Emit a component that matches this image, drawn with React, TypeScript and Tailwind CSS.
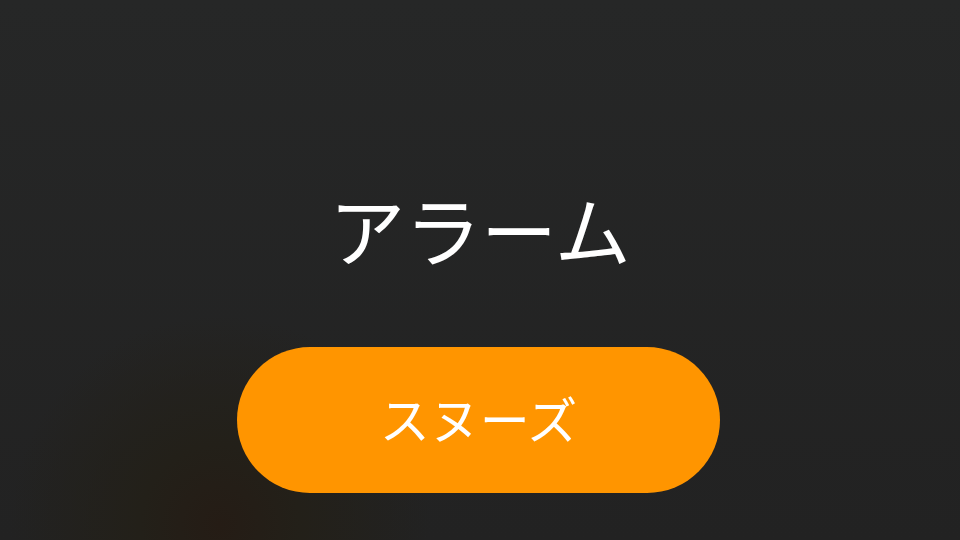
export default function App() {
  return (
    <div
      className="relative flex h-[540px] w-[960px] flex-col items-center overflow-hidden bg-[#252626] bg-[radial-gradient(circle_at_220px_525px,#251c15_0px,#232019_80px,rgba(34,34,34,0)_210px),linear-gradient(to_bottom,#262727,#222222)]"
      style={{ fontFamily: '"Noto Sans CJK JP", "Noto Sans", sans-serif' }}
    >
      <h1 className="mt-[190px] text-[76px] leading-none font-normal text-white">アラーム</h1>
      <button className="mt-[81px] mr-[3px] flex h-[146px] w-[483px] items-center justify-center rounded-full bg-[#ff9500] pb-[7px] text-[50px] leading-none text-white">
        スヌーズ
      </button>
    </div>
  );
}
